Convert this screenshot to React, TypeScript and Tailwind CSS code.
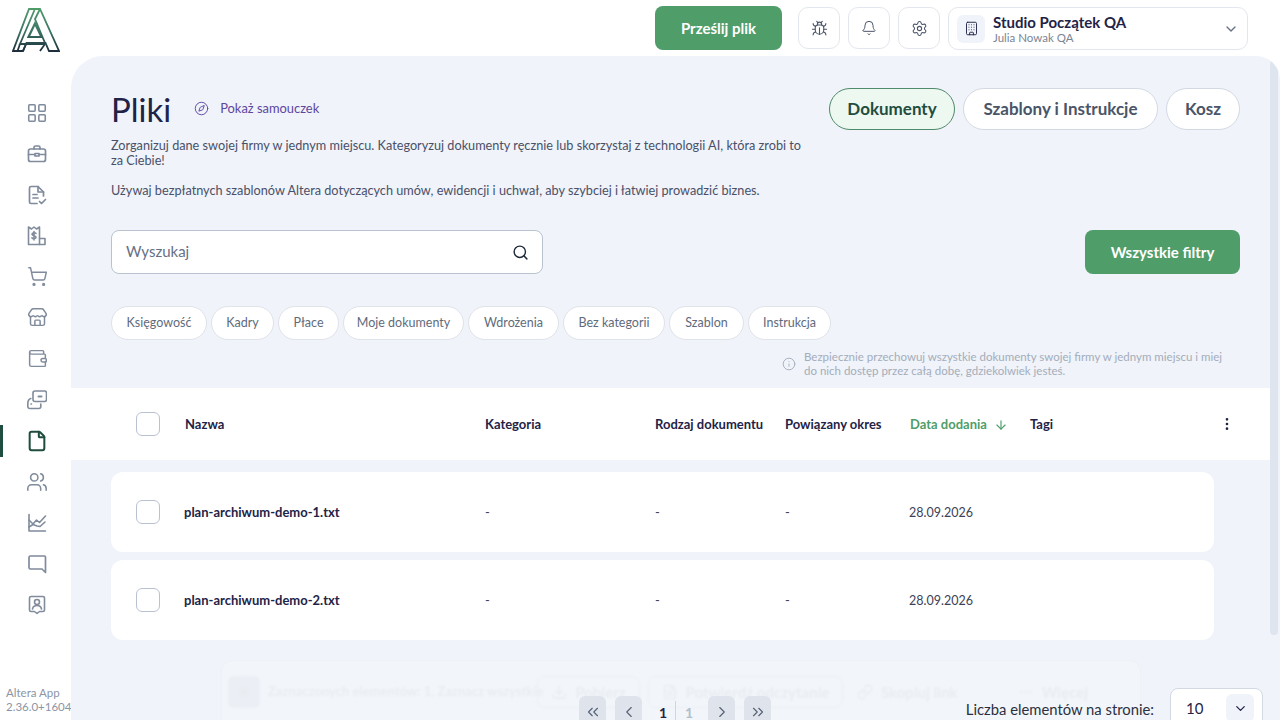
import {
  ArrowDown,
  Bell,
  Building,
  Bug,
  ChevronDown,
  ChevronLeft,
  ChevronRight,
  ChevronsLeft,
  ChevronsRight,
  Compass,
  Download,
  File,
  FileText,
  Info,
  LayoutGrid,
  Link,
  MoreHorizontal,
  MoreVertical,
  Search,
  Settings,
  ShoppingCart,
  Store,
  Users,
  Wallet,
  X,
} from "lucide-react"

function Logo() {
  return (
    <svg width="48" height="44" viewBox="0 0 48 44" fill="none">
      <defs>
        <linearGradient id="logo" x1="0" y1="0" x2="0" y2="44" gradientUnits="userSpaceOnUse">
          <stop offset="0" stopColor="#4f9d69" />
          <stop offset="0.55" stopColor="#3a7263" />
          <stop offset="1" stopColor="#1c2b3a" />
        </linearGradient>
      </defs>
      <g stroke="url(#logo)" strokeWidth="1.8">
        <path d="M17 1h11l19 42H37l-3.500-8h-19L11 43H1z" />
        <path d="M22.500 2 8 36h24" />
        <path d="M28 1l-5 10 10 24" />
        <path d="M23 15.500 16.500 29h13z" strokeWidth="2.200" />
        <path d="M8 36l-2.500 7M14 36l-3 7M33 36l-5 7" />
      </g>
    </svg>
  )
}

function BriefcaseIcon() {
  return (
    <svg width="20" height="20" viewBox="0 0 20 20" fill="none" stroke="currentColor" strokeWidth="1.700" strokeLinejoin="round" strokeLinecap="round">
      <rect x="1.500" y="5" width="17" height="12.500" rx="2" />
      <path d="M7 5V3.500A1.500 1.500 0 0 1 8.500 2h3A1.500 1.500 0 0 1 13 3.500V5" />
      <path d="M1.500 10.500H8M12 10.500h6.500M8 9.500h4v2.500H8z" />
    </svg>
  )
}

function DocCheckIcon() {
  return (
    <svg width="20" height="20" viewBox="0 0 20 20" fill="none" stroke="currentColor" strokeWidth="1.700" strokeLinejoin="round" strokeLinecap="round">
      <path d="M10 18.500H4A1.500 1.500 0 0 1 2.500 17V3A1.500 1.500 0 0 1 4 1.500h7l5.500 5.500v4" />
      <path d="M11 1.500V7h5.500" />
      <path d="M6 9.500h4M6 13h5" />
      <path d="M12.500 16.500l2 2 4-4" />
    </svg>
  )
}

function ReceiptIcon() {
  return (
    <svg width="20" height="20" viewBox="0 0 20 20" fill="none" stroke="currentColor" strokeWidth="1.600" strokeLinejoin="round" strokeLinecap="round">
      <path d="M1.500 1 4.500 3 7 1l2.500 2 3-2v17.500h-11z" />
      <path d="M12.500 12.500h5.500v6h-5.500" />
      <path d="M9 7.500C8.500 6.500 5 6.500 5 8.300s4 1 4 2.900-3.500 1.600-4 .6M7 5.500v8.500" />
    </svg>
  )
}

function TransferIcon() {
  return (
    <svg width="20" height="20" viewBox="0 0 20 20" fill="none" stroke="currentColor" strokeWidth="1.600" strokeLinejoin="round" strokeLinecap="round">
      <rect x="6" y="1" width="13.500" height="10.500" rx="2" />
      <path d="M11.500 6.500h3" strokeWidth="2" />
      <path d="M.8 14c0-3 1-5 3-5.500M.8 14v2.500a2 2 0 0 0 2 2h9a2 2 0 0 0 2-2V14M4 14h.5" />
    </svg>
  )
}

function ChartIcon() {
  return (
    <svg width="20" height="20" viewBox="0 0 20 20" fill="none" stroke="currentColor" strokeWidth="1.600" strokeLinejoin="round" strokeLinecap="round">
      <path d="M2 1.500V18h16.500" />
      <path d="M2 7l4 4 3.500-4 3 2.500L18.500 3" />
      <path d="M2 14l4-2.500 4 1.500 3 .5 5-4.500" />
    </svg>
  )
}

function ChatIcon() {
  return (
    <svg width="20" height="20" viewBox="0 0 20 20" fill="none" stroke="currentColor" strokeWidth="1.700" strokeLinejoin="round">
      <path d="M3.500 2h14a1 1 0 0 1 1 1v15.500L15 15H3.500A1.500 1.500 0 0 1 2 13.500v-10A1.500 1.500 0 0 1 3.500 2z" />
    </svg>
  )
}

function ContactIcon() {
  return (
    <svg width="20" height="20" viewBox="0 0 20 20" fill="none" stroke="currentColor" strokeWidth="1.600" strokeLinejoin="round" strokeLinecap="round">
      <path d="M4 1.500h12A1.500 1.500 0 0 1 17.500 3v12a1.500 1.500 0 0 1-1.500 1.500h-3.500L10 18.500l-2.500-2H4A1.500 1.500 0 0 1 2.500 15V3A1.500 1.500 0 0 1 4 1.500z" />
      <circle cx="10" cy="7" r="2.500" />
      <path d="M5.500 14c.5-2.500 2.500-3.500 4.500-3.500s4 1 4.500 3.500" />
    </svg>
  )
}

const navIcons = [
  <LayoutGrid key="grid" size={22} strokeWidth={1.7} />,
  <BriefcaseIcon key="case" />,
  <DocCheckIcon key="doc" />,
  <ReceiptIcon key="receipt" />,
  <ShoppingCart key="cart" size={21} strokeWidth={1.7} />,
  <Store key="store" size={21} strokeWidth={1.7} />,
  <Wallet key="wallet" size={21} strokeWidth={1.7} />,
  <TransferIcon key="transfer" />,
]

const navIconsBottom = [
  <Users key="users" size={22} strokeWidth={1.7} />,
  <ChartIcon key="chart" />,
  <ChatIcon key="chat" />,
  <ContactIcon key="contact" />,
]

const chips = [
  { label: "Księgowość", width: "w-[96px]" },
  { label: "Kadry", width: "w-[63px]" },
  { label: "Płace", width: "w-[61px]" },
  { label: "Moje dokumenty", width: "w-[121px]" },
  { label: "Wdrożenia", width: "w-[91px]" },
  { label: "Bez kategorii", width: "w-[102px]" },
  { label: "Szablon", width: "w-[75px]" },
  { label: "Instrukcja", width: "w-[83px]" },
]

const files = ["plan-archiwum-demo-1.txt", "plan-archiwum-demo-2.txt"]

function IconButton({ children }: { children: React.ReactNode }) {
  return (
    <button className="flex h-[42px] w-[42px] items-center justify-center rounded-[10px] border border-[#e2e6ee] bg-white text-[#4a5568]">
      {children}
    </button>
  )
}

function PageButton({ children }: { children: React.ReactNode }) {
  return (
    <button className="flex h-8 w-[27px] items-center justify-center rounded-md bg-[#dfe4ec] text-[#556275]">
      {children}
    </button>
  )
}

export default function App() {
  return (
    <div className="flex h-screen w-[1280px] overflow-hidden bg-white font-['Lato',sans-serif] text-[#1f2347]">
      {/* Sidebar */}
      <aside className="relative flex w-[71px] shrink-0 flex-col">
        <div className="flex h-[56px] items-start justify-center pt-[8px]">
          <Logo />
        </div>
        <nav className="relative mt-[36px] flex flex-col items-center pl-[3px] text-[#808b9c]">
          {navIcons.map((icon, i) => (
            <div key={i} className="flex h-[41px] items-center justify-center">
              {icon}
            </div>
          ))}
          <div className="flex h-[41px] items-center justify-center text-[#1f4d3f]">
            <File size={22} strokeWidth={2.2} />
          </div>
          {navIconsBottom.map((icon, i) => (
            <div key={i} className="flex h-[41px] items-center justify-center">
              {icon}
            </div>
          ))}
          <span className="absolute left-0 top-[333px] h-[32px] w-[3px] bg-[#1f4d3f]" />
        </nav>
        <div className="mt-auto whitespace-nowrap pb-[6px] pl-[6px] text-[11.5px] leading-[14px] text-[#8b95a5]">
          <p>Altera App</p>
          <p>2.36.0+1604</p>
        </div>
      </aside>

      <div className="flex min-w-0 flex-1 flex-col">
        {/* Top bar */}
        <header className="flex h-[56px] shrink-0 items-start justify-end gap-4 pr-[32px] pt-[6px]">
          <button className="h-[44px] w-[127px] rounded-lg bg-[#4f9d69] text-[15px] font-bold text-white">Prześlij plik</button>
          <div className="flex gap-2 pt-px">
            <IconButton><Bug size={17} strokeWidth={1.5} /></IconButton>
            <IconButton><Bell size={16} strokeWidth={1.5} /></IconButton>
            <IconButton><Settings size={17} strokeWidth={1.5} /></IconButton>
            <div className="flex h-[43px] w-[300px] items-center rounded-[10px] border border-[#e2e6ee] bg-white pl-2 pr-[8px]">
              <div className="flex h-[28px] w-[28px] items-center justify-center rounded-md bg-[#f0f3f9] text-[#1f2347]">
                <Building size={15} strokeWidth={1.5} />
              </div>
              <div className="ml-[8px] flex-1 leading-none">
                <p className="text-[15px] font-bold leading-[18px]">Studio Początek QA</p>
                <p className="text-[11.5px] leading-[14px] text-[#7b8494]">Julia Nowak QA</p>
              </div>
              <ChevronDown size={16} className="text-[#667085]" />
            </div>
          </div>
        </header>

        {/* Main panel */}
        <main className="relative flex min-h-0 flex-1 flex-col overflow-hidden rounded-tl-[32px] rounded-tr-[24px] bg-[#f0f3f9]">
          <section className="px-[40px] pt-[32px]">
            <div className="flex justify-between">
              <div className="w-[700px]">
                <div className="flex items-center gap-[23px]">
                  <h1 className="text-[33px] font-normal leading-[42px]">Pliki</h1>
                  <span className="flex items-center gap-[11px] text-[12.9px] text-[#5d46a0]">
                    <Compass size={15} strokeWidth={1.5} />
                    Pokaż samouczek
                  </span>
                </div>
                <p className="mt-[8px] text-[12.7px] leading-[15px] text-[#4a5068]">
                  Zorganizuj dane swojej firmy w jednym miejscu. Kategoryzuj dokumenty ręcznie lub skorzystaj z technologii AI, która zrobi to za Ciebie!
                </p>
                <p className="mt-[15px] text-[12.7px] leading-[15px] text-[#4a5068]">
                  Używaj bezpłatnych szablonów Altera dotyczących umów, ewidencji i uchwał, aby szybciej i łatwiej prowadzić biznes.
                </p>
              </div>
              <div className="flex gap-2">
                <button className="h-[42px] w-[126px] rounded-full border border-[#4f8a6a] bg-[#edf8f1] text-[17px] font-bold text-[#1f4d3f]">Dokumenty</button>
                <button className="h-[42px] w-[195px] rounded-full border border-[#d3d9e3] bg-white text-[17px] font-bold text-[#4a5568]">Szablony i Instrukcje</button>
                <button className="h-[42px] w-[74px] rounded-full border border-[#d3d9e3] bg-white text-[17px] font-bold text-[#4a5568]">Kosz</button>
              </div>
            </div>

            <div className="mt-[32px] flex items-center justify-between">
              <div className="flex h-[44px] w-[432px] items-center justify-between rounded-lg border border-[#b9c2d0] bg-white pl-[14px] pr-[13px]">
                <span className="pb-[2px] text-[15px] text-[#667085]">Wyszukaj</span>
                <Search size={17} className="text-[#1f2937]" />
              </div>
              <button className="h-[44px] w-[155px] rounded-lg bg-[#4f9d69] text-[15px] font-bold text-white">Wszystkie filtry</button>
            </div>

            <div className="mt-[32px] flex gap-[4px]">
              {chips.map((chip) => (
                <span key={chip.label} className={`${chip.width} flex h-[34px] items-center justify-center rounded-full border border-[#dfe3ea] bg-white pt-px text-[12.5px] text-[#5f6b7c]`}>
                  {chip.label}
                </span>
              ))}
            </div>

            <div className="mt-[10px] flex justify-end pr-[10px]">
              <div className="flex w-[448px] items-center gap-[8px]">
                <Info size={14} strokeWidth={1.5} className="shrink-0 text-[#a0a9b8]" />
                <p className="text-[11.5px] leading-[14px] text-[#a3adbb]">
                  Bezpiecznie przechowuj wszystkie dokumenty swojej firmy w jednym miejscu i miej do nich dostęp przez całą dobę, gdziekolwiek jesteś.
                </p>
              </div>
            </div>
          </section>

          {/* Table header */}
          <div className="mr-[10px] mt-[10px] flex h-[72px] items-center bg-white text-[13px] font-bold">
            <div className="ml-[65px] h-[24px] w-[24px] rounded-md border border-[#b9c2d0]" />
            <span className="ml-[25px] w-[300px] pt-[2px]">Nazwa</span>
            <span className="w-[170px] pt-[2px]">Kategoria</span>
            <span className="w-[130px] pt-[2px]">Rodzaj dokumentu</span>
            <span className="w-[125px] pt-[2px]">Powiązany okres</span>
            <span className="flex w-[120px] items-center gap-[7px] pt-[2px] text-[#4f9d69]">
              Data dodania <ArrowDown size={14} />
            </span>
            <span className="flex-1 pt-[2px]">Tagi</span>
            <MoreVertical size={16} className="mr-[35px]" />
          </div>

          {/* Rows */}
          <div className="ml-[40px] mr-[66px] mt-[12px] flex flex-col gap-[8px]">
            {files.map((name) => (
              <div key={name} className="flex h-[80px] items-center rounded-xl bg-white text-[13px]">
                <div className="ml-[25px] h-[24px] w-[24px] rounded-md border border-[#b9c2d0]" />
                <span className="ml-[24px] w-[301px] pt-[2px] font-bold">{name}</span>
                <span className="w-[170px] pt-[2px] text-[#3c4257]">-</span>
                <span className="w-[130px] pt-[2px] text-[#3c4257]">-</span>
                <span className="w-[124px] pt-[2px] text-[#3c4257]">-</span>
                <span className="pt-[2px] text-[12.5px] text-[#3c4257]">28.09.2026</span>
              </div>
            ))}
          </div>

          {/* Scrollbar */}
          <div className="absolute right-[2px] top-[4px] h-[575px] w-[8px] rounded-full bg-[#dfe5ef]" />

          {/* Bulk actions bar, faded behind the pagination */}
          <div className="absolute bottom-[-20px] left-[150px] h-[80px] w-[920px] rounded-xl border border-[#eef1f6] bg-[#f2f5f9]" />
          <div className="absolute bottom-[11px] left-[157px] flex h-[34px] items-center text-[15px] text-[#6b7280] opacity-[0.07] blur-[1px]">
            <span className="mr-[8px] flex h-[32px] w-[32px] items-center justify-center rounded-md bg-[#94a3b8]"><X size={14} /></span>
            <span className="mr-[17px] w-[252px] whitespace-nowrap text-[13px] font-bold">Zaznaczonych elementów: 1. Zaznacz wszystkie</span>
            <span className="mr-[8px] flex h-[32px] w-[103px] items-center justify-center gap-[8px] rounded-lg border border-[#94a3b8] font-bold"><Download size={16} />Pobierz</span>
            <span className="mr-[14px] flex h-[32px] w-[195px] items-center justify-center gap-[8px] rounded-lg border border-[#94a3b8] font-bold"><FileText size={16} />Potwierdź odczytanie</span>
            <span className="mr-[60px] flex h-[32px] items-center gap-[8px] font-bold"><Link size={16} />Skopiuj link</span>
            <span className="flex h-[32px] items-center gap-[8px] font-bold"><MoreHorizontal size={16} />Więcej</span>
          </div>

          {/* Pagination */}
          <div className="absolute bottom-[-8px] left-[508px] flex items-center">
            <PageButton><ChevronsLeft size={18} strokeWidth={1.5} /></PageButton>
            <span className="w-[9px]" />
            <PageButton><ChevronLeft size={18} strokeWidth={1.5} /></PageButton>
            <span className="w-[33px] pl-[17px] text-[14px] font-bold">1</span>
            <span className="h-[22px] w-px bg-[#cfd6e0]" />
            <span className="w-[32px] pl-[9px] text-[14px] font-bold text-[#b4bdca]">1</span>
            <PageButton><ChevronRight size={18} strokeWidth={1.5} /></PageButton>
            <span className="w-[9px]" />
            <PageButton><ChevronsRight size={18} strokeWidth={1.5} /></PageButton>
          </div>
          <div className="absolute bottom-[-8px] right-[17px] flex items-center gap-[16px]">
            <span className="pt-[2px] text-[14.8px] text-[#2b3040]">Liczba elementów na stronie:</span>
            <div className="flex h-[40px] w-[93px] items-center justify-between rounded-lg border border-[#d3d9e3] bg-white pl-[15px] pr-[8px] text-[15px]">
              10
              <span className="flex h-[28px] w-[28px] items-center justify-center rounded-md bg-[#f0f3f9]"><ChevronDown size={15} /></span>
            </div>
          </div>
        </main>
      </div>
    </div>
  )
}
